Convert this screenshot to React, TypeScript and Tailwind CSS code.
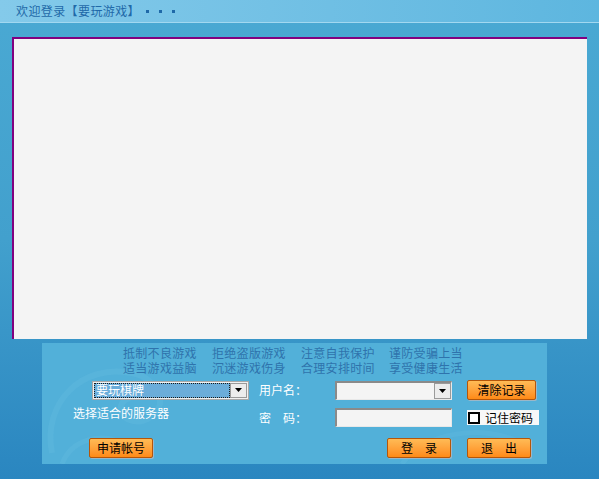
import React from "react";

const FONT = { fontFamily: '"Noto Sans CJK SC", "Liberation Sans", sans-serif' };

const TIPS = [
  "抵制不良游戏",
  "拒绝盗版游戏",
  "注意自我保护",
  "谨防受骗上当",
  "适当游戏益脑",
  "沉迷游戏伤身",
  "合理安排时间",
  "享受健康生活",
];

function Arrow() {
  return (
    <div className="flex h-full w-[17px] items-center justify-center border border-[#9a9a9a] bg-[#ececec]">
      <svg width="7" height="4" viewBox="0 0 7 4">
        <polygon points="0,0 7,0 3.5,4" fill="#000" />
      </svg>
    </div>
  );
}

function OrangeButton({ label, width }: { label: string; width: string }) {
  return (
    <button
      className={`${width} flex h-[20px] items-center justify-center rounded-[2px] border border-[#b4560a] bg-gradient-to-b from-[#ffbb55] to-[#ff8a14] text-[12px] leading-none text-black shadow-[1px_1px_0_#9bb7c8]`}
    >
      {label}
    </button>
  );
}

export default function App() {
  return (
    <div
      className="relative h-[479px] w-[599px] overflow-hidden bg-gradient-to-b from-[#4aa9d3] via-[#42a0cd] to-[#2a86c0]"
      style={FONT}
    >
      {/* title bar */}
      <div className="flex h-[23px] items-center border-b border-[#a2d8f0] bg-gradient-to-r from-[#84caea] to-[#5db6df] pl-[16px] text-[12px] tracking-[0.4px] text-[#1f69a8]">
        <span>欢迎登录【要玩游戏】</span>
        <span className="ml-[6px] mt-[1px] flex gap-[10px]">
          <i className="block h-[3px] w-[3px] bg-[#1f69a8]" />
          <i className="block h-[3px] w-[3px] bg-[#1f69a8]" />
          <i className="block h-[3px] w-[3px] bg-[#1f69a8]" />
        </span>
      </div>

      {/* content area */}
      <div className="ml-[12px] mt-[14px] h-[302px] w-[575px] border-l-2 border-t-2 border-[#800080] bg-[#f4f4f4]" />

      {/* login panel */}
      <div className="relative ml-[42px] mt-[4px] h-[121px] w-[505px] overflow-hidden bg-[#52b0d9]">
        <svg className="absolute left-0 top-0" width="505" height="121" viewBox="0 0 505 121" fill="none">
          <path d="M10 110 C 0 60, 40 20, 90 30 C 120 36, 130 70, 100 78 C 80 82, 70 60, 88 55" stroke="#66bce2" strokeWidth="6" opacity="0.3" />
          <path d="M20 121 C 30 95, 60 90, 80 100" stroke="#66bce2" strokeWidth="5" opacity="0.3" />
          <path d="M360 121 C 380 90, 440 80, 480 100" stroke="#66bce2" strokeWidth="5" opacity="0.25" />
        </svg>

        <div className="relative">
          {/* tips */}
          <div className="grid grid-cols-[89px_89px_88px_auto] pl-[81px] pt-[2px] text-[12px] leading-[15px] text-[#2f73ac]">
            {TIPS.map((t) => (
              <span key={t} className="w-[74px] tracking-[0.3px]">
                {t}
              </span>
            ))}
          </div>

          {/* row 1 */}
          <div className="mt-[5px] flex h-[20px] items-center pl-[50px] text-[12px]">
            <div className="flex h-[19px] w-[157px] border border-[#a8a8a8] bg-[#f0f0f0] p-[1px]">
              <div className="flex flex-1 items-center border border-dotted border-[#1a1a1a] bg-[#6badda] pl-[1px] leading-none text-white">
                要玩棋牌
              </div>
              <Arrow />
            </div>
            <span className="ml-[10px] w-[76px] text-white">用户名：</span>
            <div className="flex h-[19px] w-[117px] border-b border-l-2 border-r border-t-2 border-[#8a8a8a] border-b-[#e8e8e8] border-r-[#e8e8e8] bg-[#f4f4f4]">
              <div className="flex-1" />
              <Arrow />
            </div>
            <div className="ml-[15px]">
              <OrangeButton label="清除记录" width="w-[69px]" />
            </div>
          </div>

          {/* row 2 */}
          <div className="mt-[8px] flex h-[19px] items-center text-[12px]">
            <span className="-mt-[10px] w-[217px] pl-[31px] text-white">选择适合的服务器</span>
            <span className="w-[76px] text-white">密　码：</span>
            <div className="h-[19px] w-[117px] border-b border-l-2 border-r border-t-2 border-[#8a8a8a] border-b-[#e8e8e8] border-r-[#e8e8e8] bg-[#f4f4f4]" />
            <div className="ml-[15px] flex h-[15px] w-[72px] items-center bg-[#f8f8f8]">
              <span className="ml-[1px] h-[12px] w-[12px] border-2 border-black bg-white" />
              <span className="ml-[5px] leading-none text-black">记住密码</span>
            </div>
          </div>

          {/* row 3 */}
          <div className="mt-[11px] flex pl-[47px]">
            <OrangeButton label="申请帐号" width="w-[64px]" />
            <div className="ml-[234px]">
              <OrangeButton label="登　录" width="w-[64px]" />
            </div>
            <div className="ml-[16px]">
              <OrangeButton label="退　出" width="w-[64px]" />
            </div>
          </div>
        </div>
      </div>
    </div>
  );
}
